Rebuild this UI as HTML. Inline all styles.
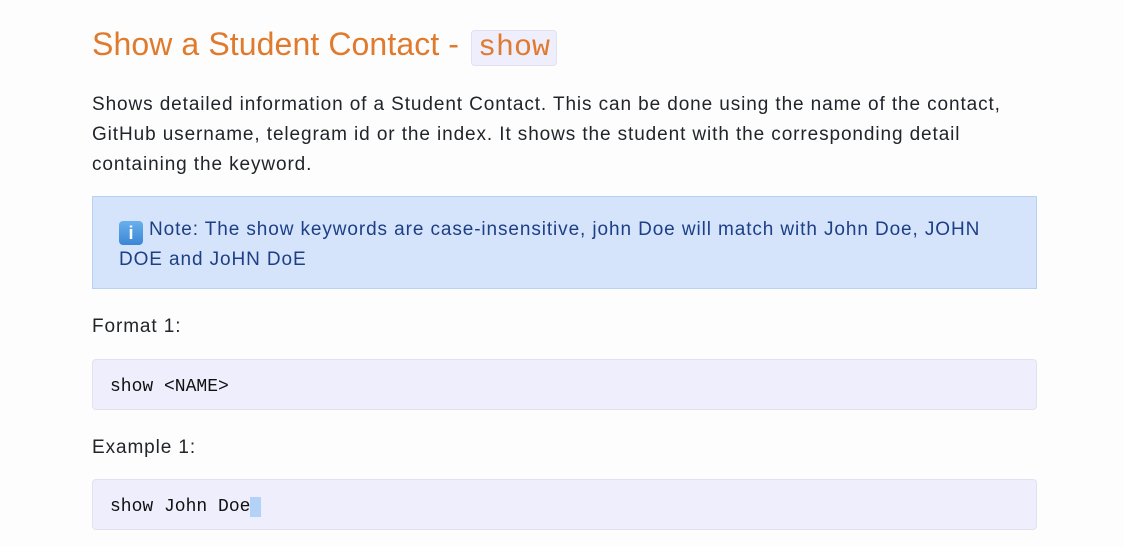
<!DOCTYPE html>
<html><head><style>
body{margin:0;background:#fdfdfe;font-family:"Liberation Sans",sans-serif;color:#212529;width:1124px;height:546px;overflow:hidden}
.c{position:absolute;left:92px;width:1000px;white-space:nowrap}
h1{position:absolute;left:92px;top:24px;margin:0;font-weight:normal;font-size:32px;letter-spacing:0.1px;color:#e07a2c;line-height:40px;white-space:nowrap}
h1 code{font-family:"Liberation Mono",monospace;font-size:30px;letter-spacing:0;background:#eeeefc;border:1px solid #e2e2ee;border-radius:4px;padding:0 6px;color:#e07a2c;margin-left:3px}
p{margin:0;font-size:19px;letter-spacing:0.9px;line-height:30px}
.note{position:absolute;left:92px;top:196px;width:945px;height:93px;background:#d6e4fb;border:1px solid #b7d2f5;color:#1c3f86;font-size:19px;letter-spacing:0.9px;line-height:30px;box-sizing:border-box;padding:18px 26px 0;white-space:nowrap}
.ic{display:inline-block;width:24px;height:24px;background:linear-gradient(#6ab0ec,#3b86d6);border-radius:4px;color:#fff;font-weight:bold;text-align:center;line-height:24px;font-size:18px;vertical-align:-4px;margin-right:6px;letter-spacing:0}
.pre{position:absolute;left:92px;width:945px;height:51px;background:#eeeefd;border:1px solid #e2e2ee;border-radius:4px;box-sizing:border-box;font-family:"Liberation Mono",monospace;font-size:18px;line-height:54px;padding-left:17px;color:#111}
.sel{background:#b4d2f8}
</style></head><body>
<h1>Show a Student Contact - <code>show</code></h1>
<p class="c" style="top:90px">Shows detailed information of a Student Contact. This can be done using the name of the contact,<br>GitHub username, telegram id or the index. It shows the student with the corresponding detail<br>containing the keyword.</p>
<div class="note"><span class="ic">i</span>Note: The show keywords are case-insensitive, john Doe will match with John Doe, JOHN<br>DOE and JoHN DoE</div>
<p class="c" style="top:312px">Format 1:</p>
<div class="pre" style="top:359px">show &lt;NAME&gt;</div>
<p class="c" style="top:433px">Example 1:</p>
<div class="pre" style="top:479px">show John Doe<span class="sel">&nbsp;</span></div>
</body></html>
